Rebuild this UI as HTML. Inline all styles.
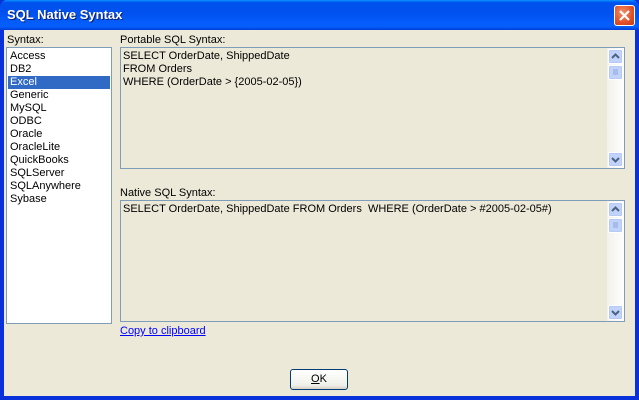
<!DOCTYPE html>
<html><head><style>
*{margin:0;padding:0;box-sizing:border-box}
body{width:639px;height:400px;overflow:hidden;font-family:"Liberation Sans",sans-serif;font-size:11px;background:#0831d9;position:relative}
.title{position:absolute;left:0;top:0;width:639px;height:30px;background:linear-gradient(#0997ff 0,#0053ee 8%,#0050ee 40%,#0660fe 88%,#003dd7 100%);border-radius:7px 7px 0 0}
.title span{position:absolute;left:7px;top:7px;color:#fff;font-weight:bold;font-size:13px;text-shadow:1px 1px #0f1e6b}
.close{position:absolute;left:614px;top:5px;width:21px;height:21px;border:1px solid #fff;border-radius:3px;background:radial-gradient(circle at 40% 35%,#f0906a,#e0502a 60%,#c13b15)}
.client{position:absolute;left:4px;top:30px;width:631px;height:366px;background:#ece9d8}
.a{position:absolute}
.box{border:1px solid #7f9db9}
.sb{position:absolute;right:0;top:0;width:17px;height:100%;background:linear-gradient(90deg,#f3f1ec,#fefefe)}
.btn{position:absolute;left:1px;width:15px;height:15px;border:1px solid #fff;border-radius:2px;background:#c1d3fb;box-shadow:inset 0 0 0 1px #b7caf5}
.lbl{color:#000}
</style></head><body>
<div class="title"><span>SQL Native Syntax</span>
<div class="close"><svg width="19" height="19" viewBox="0 0 19 19"><path d="M5 5L14 14M14 5L5 14" stroke="#fff" stroke-width="2.2"/></svg></div></div>
<div class="client">
<div class="a lbl" style="left:3px;top:4px">Syntax:</div>
<div class="a box" style="left:2px;top:17px;width:106px;height:277px;background:#fff;line-height:13px;padding:2px 0 0 3px">
Access<br>DB2<br><span style="background:#316ac5;color:#fff;display:block;margin-left:-2px;padding-left:2px;width:102px">Excel</span>Generic<br>MySQL<br>ODBC<br>Oracle<br>OracleLite<br>QuickBooks<br>SQLServer<br>SQLAnywhere<br>Sybase</div>
<div class="a lbl" style="left:116px;top:4px">Portable SQL Syntax:</div>
<div class="a box" style="left:116px;top:17px;width:505px;height:122px;line-height:13px;padding:2px 0 0 2px">SELECT OrderDate, ShippedDate<br>FROM Orders<br>WHERE (OrderDate &gt; {2005-02-05})
<div class="sb"><div class="btn" style="top:1px"><svg width="13" height="13"><path d="M3 8L6.5 4.5L10 8" stroke="#4d6185" stroke-width="2" fill="none"/></svg></div><div class="btn" style="top:17px"><svg width="13" height="13"><path d="M4 4h5M4 6h5M4 8h5" stroke="#8ea6de"/></svg></div><div class="btn" style="bottom:1px"><svg width="13" height="13"><path d="M3 5L6.5 8.5L10 5" stroke="#4d6185" stroke-width="2" fill="none"/></svg></div></div></div>
<div class="a lbl" style="left:116px;top:157px">Native SQL Syntax:</div>
<div class="a box" style="left:116px;top:170px;width:505px;height:122px;line-height:13px;padding:2px 0 0 2px">SELECT OrderDate, ShippedDate FROM Orders&nbsp; WHERE (OrderDate &gt; #2005-02-05#)
<div class="sb"><div class="btn" style="top:1px"><svg width="13" height="13"><path d="M3 8L6.5 4.5L10 8" stroke="#4d6185" stroke-width="2" fill="none"/></svg></div><div class="btn" style="top:17px"><svg width="13" height="13"><path d="M4 4h5M4 6h5M4 8h5" stroke="#8ea6de"/></svg></div><div class="btn" style="bottom:1px"><svg width="13" height="13"><path d="M3 5L6.5 8.5L10 5" stroke="#4d6185" stroke-width="2" fill="none"/></svg></div></div></div>
<div class="a" style="left:116px;top:295px;color:#0000ff;text-decoration:underline">Copy to clipboard</div>
<div class="a" style="left:286px;top:339px;width:58px;height:21px;border:1px solid #003c74;border-radius:3px;background:linear-gradient(#fff,#f0f0ea 80%,#d6d0c5);text-align:center;line-height:19px"><u>O</u>K</div>
</div>
</body></html>
